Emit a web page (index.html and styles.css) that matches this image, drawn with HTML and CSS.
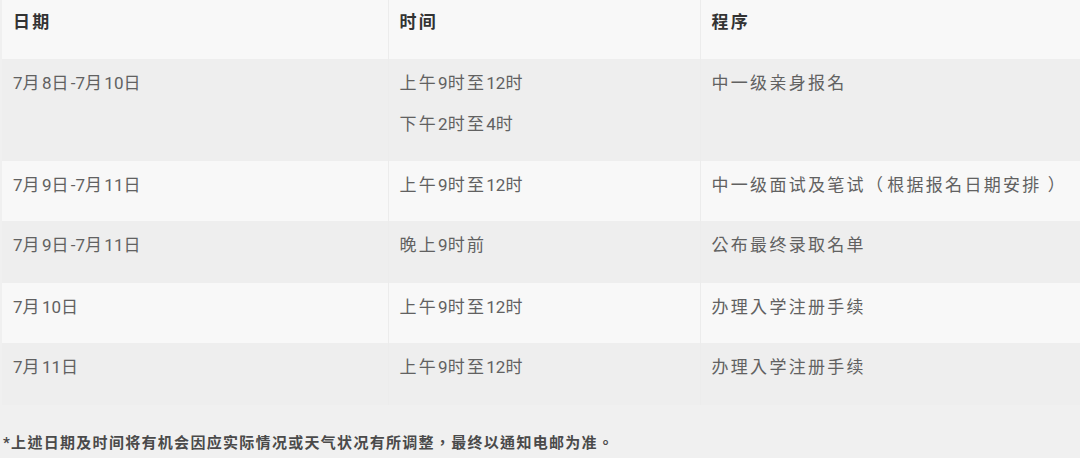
FILE: index.html
```html
<!DOCTYPE html>
<html lang="zh-Hant">
<head>
<meta charset="utf-8">
<link rel="stylesheet" href="styles.css">
</head>
<body>
<table class="schedule">
  <colgroup>
    <col class="c-date">
    <col class="c-time">
    <col class="c-proc">
  </colgroup>
  <thead>
    <tr class="head">
      <th>日期</th>
      <th>时间</th>
      <th>程序</th>
    </tr>
  </thead>
  <tbody>
    <tr class="r1 dark">
      <td><span class="n">7</span>月<span class="n">8</span>日<span class="n">-7</span>月<span class="n">10</span>日</td>
      <td><p>上午<span class="n">9</span>时至<span class="n">12</span>时</p><p class="next">下午<span class="n">2</span>时至<span class="n">4</span>时</p></td>
      <td>中一级亲身报名</td>
    </tr>
    <tr class="r2 light">
      <td><span class="n">7</span>月<span class="n">9</span>日<span class="n">-7</span>月<span class="n">11</span>日</td>
      <td>上午<span class="n">9</span>时至<span class="n">12</span>时</td>
      <td>中一级面试及笔试<span class="paren open">（</span>根据报名日期安排<span class="paren close">）</span></td>
    </tr>
    <tr class="r3 dark">
      <td><span class="n">7</span>月<span class="n">9</span>日<span class="n">-7</span>月<span class="n">11</span>日</td>
      <td>晚上<span class="n">9</span>时前</td>
      <td>公布最终录取名单</td>
    </tr>
    <tr class="r4 light">
      <td><span class="n">7</span>月<span class="n">10</span>日</td>
      <td>上午<span class="n">9</span>时至<span class="n">12</span>时</td>
      <td>办理入学注册手续</td>
    </tr>
    <tr class="r5 dark">
      <td><span class="n">7</span>月<span class="n">11</span>日</td>
      <td>上午<span class="n">9</span>时至<span class="n">12</span>时</td>
      <td>办理入学注册手续</td>
    </tr>
  </tbody>
</table>
<p class="note">*上述日期及时间将有机会因应实际情况或天气状况有所调整，最终以通知电邮为准。</p>
</body>
</html>
```

FILE: styles.css
```css
html, body {
  margin: 0;
  padding: 0;
}
body {
  background: #f0f0f0;
  font-family: Roboto, "Noto Sans CJK TC", sans-serif;
  width: 1080px;
  height: 458px;
  overflow: hidden;
}
.schedule {
  margin-left: 2px;
  width: 1078px;
  border-collapse: collapse;
  table-layout: fixed;
}
.c-date { width: 386px; }
.c-time { width: 312px; }
.c-proc { width: 380px; }

.schedule th,
.schedule td {
  text-align: left;
  vertical-align: top;
  padding: 12px 10px 0 11px;
  font-size: 17px;
  line-height: 24px;
  letter-spacing: 2.3px;
  color: #616161;
  font-weight: 400;
  white-space: nowrap;
}
.schedule .n {
  letter-spacing: 0;
}
.schedule .paren.open {
  margin-right: 2px;
}
.schedule .paren.close {
  margin-left: 6px;
}
.schedule th + th,
.schedule td + td {
  border-left: 1px solid #ececec;
}
.schedule th {
  color: #333;
  font-weight: 700;
  padding-top: 10px;
  background: #f8f8f8;
}
.head { height: 59px; }
.r1 { height: 102px; }
.r2 { height: 60px; }
.r3 { height: 62px; }
.r4 { height: 60px; }
.r5 { height: 62px; }
.dark { background: #eeeeee; }
.light { background: #f8f8f8; }

.schedule p {
  margin: 0;
}
.schedule p.next {
  margin-top: 17px;
}
.note {
  margin: 28px 0 0 3px;
  font-size: 15px;
  line-height: 20px;
  letter-spacing: 1.3px;
  color: #4a4a4a;
  font-weight: 700;
  white-space: nowrap;
}
```
